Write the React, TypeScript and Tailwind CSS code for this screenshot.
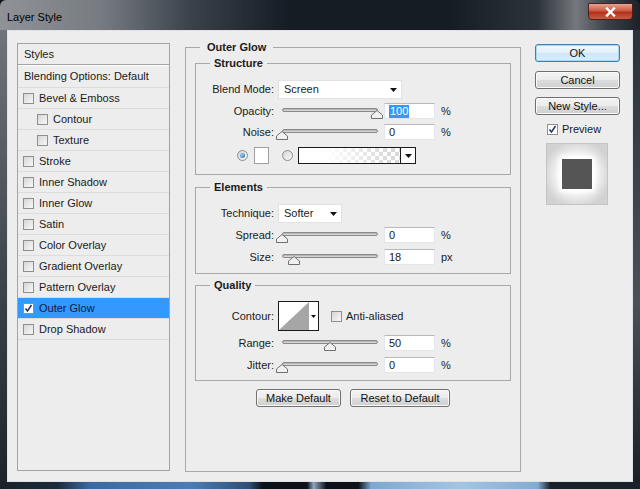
import React from "react";

type Row = { label: string; indent?: boolean; checked?: boolean; active?: boolean };

const styleRows: Row[] = [
  { label: "Bevel & Emboss" },
  { label: "Contour", indent: true },
  { label: "Texture", indent: true },
  { label: "Stroke" },
  { label: "Inner Shadow" },
  { label: "Inner Glow" },
  { label: "Satin" },
  { label: "Color Overlay" },
  { label: "Gradient Overlay" },
  { label: "Pattern Overlay" },
  { label: "Outer Glow", checked: true, active: true },
  { label: "Drop Shadow" },
];

function CheckBox({ checked = false }: { checked?: boolean }) {
  return (
    <span
      className={
        checked
          ? "w-[11px] h-[11px] shrink-0 border border-[#8f8f8f] bg-white flex items-center justify-center"
          : "w-[11px] h-[11px] shrink-0 border border-[#8f8f8f] bg-[linear-gradient(135deg,#d6d6d6,#f8f8f8)] flex items-center justify-center"
      }
    >
      {checked && (
        <svg width="9" height="9" viewBox="0 0 9 9">
          <path d="M1.5 4.5 L3.5 7 L7.5 1" fill="none" stroke="#23306b" strokeWidth="1.5" />
        </svg>
      )}
    </span>
  );
}

function Arrow() {
  return (
    <svg width="7" height="4" viewBox="0 0 7 4" className="shrink-0">
      <path d="M0 0 H7 L3.5 4 Z" fill="#111" />
    </svg>
  );
}

function Slider({ pos }: { pos: number }) {
  return (
    <div className="relative w-[104px] h-[16px] shrink-0">
      <div className="mx-[4px] mt-[5px] h-[4px] rounded-full border border-[#8a8a8a] bg-[linear-gradient(#a8a8a8,#e4e4e4)]" />
      <svg
        className="absolute top-[7px]"
        style={{ left: 4 + pos * 95 - 6 }}
        width="12"
        height="9"
        viewBox="0 0 12 9"
      >
        <path d="M6 0.5 L11.5 5 V8.5 H0.5 V5 Z" fill="#f1f1f1" stroke="#707070" />
      </svg>
    </div>
  );
}

function NumBox({ value, selected = false }: { value: string; selected?: boolean }) {
  return (
    <div className="w-[51px] h-[16px] ml-[2px] bg-white border border-[#e3e6ea] border-t-[#b5b8bd] flex items-center pl-[4px] leading-none">
      {selected ? <span className="bg-[#3399ff] text-white px-[1px] py-[1px]">{value}</span> : value}
    </div>
  );
}

function SliderRow({
  label,
  pos,
  value,
  unit,
  selected,
  className,
}: {
  label: string;
  pos: number;
  value: string;
  unit: string;
  selected?: boolean;
  className: string;
}) {
  return (
    <div className={className}>
      <span className="w-[78px] shrink-0 text-right">{label}</span>
      <span className="w-[4px] shrink-0" />
      <Slider pos={pos} />
      <NumBox value={value} selected={selected} />
      <span className="ml-[6px]">{unit}</span>
    </div>
  );
}

function Button({ children, primary = false, className = "" }: { children: React.ReactNode; primary?: boolean; className?: string }) {
  return (
    <div
      className={
        (primary
          ? "border-[#3c7fb1] bg-[linear-gradient(#f1f8fd,#e2f0fa_50%,#cfe6f7_50%,#dcedf9)] shadow-[inset_0_0_0_1px_#a6d6f4] "
          : "border-[#707070] bg-[linear-gradient(#f3f3f3,#ebebeb_50%,#dddddd_50%,#cfcfcf)] shadow-[inset_0_0_0_1px_#fbfbfb] ") +
        "h-[18px] border rounded-[3px] flex items-center justify-center text-[#111] " +
        className
      }
    >
      {children}
    </div>
  );
}

function Radio({ on = false }: { on?: boolean }) {
  return (
    <span className="w-[11px] h-[11px] shrink-0 rounded-full border border-[#8c8c8c] bg-[linear-gradient(135deg,#d4d4d4,#fafafa)] flex items-center justify-center">
      {on && <span className="w-[5px] h-[5px] rounded-full bg-[radial-gradient(circle_at_35%_35%,#9fd0f5,#1f5fa8)]" />}
    </span>
  );
}

export default function App() {
  return (
    <div className="w-[640px] h-[489px] flex flex-col bg-[#0f1318] font-['Liberation_Sans',Arial,sans-serif] text-[11px] text-[#1a1a1a] overflow-hidden">
      {/* title bar */}
      <div className="h-[30px] shrink-0 flex items-start justify-between rounded-t-[6px] bg-[linear-gradient(90deg,#8f9398_0%,#767b81_16%,#3a414a_30%,#161c24_45%,#161c24_70%,#2c333b_84%,#75797e_90%,#3a4048_95%,#1c2128_100%)]">
        <span className="mt-[9px] ml-[7px] text-[11px] text-black">Layer Style</span>
        <div className="mt-[3px] mr-[7px] w-[45px] h-[17px] rounded-b-[4px] border border-[#4d1f18] bg-[linear-gradient(#e3a493,#cd5a43_45%,#b3321d_55%,#c85b44)] flex items-center justify-center">
          <svg width="11" height="10" viewBox="0 0 11 10">
            <path d="M2 1.5 L9 8.5 M9 1.5 L2 8.5" stroke="#fff" strokeWidth="2.4" strokeLinecap="square" />
          </svg>
        </div>
      </div>

      <div className="flex-1 flex min-h-0">
        <div className="w-[7px] shrink-0 bg-[linear-gradient(#6f747a,#3a4047_60%,#1e242b)]" />

        {/* dialog body */}
        <div className="flex-1 bg-[#ededed] border border-[#dfe2e6] flex items-start pl-[9px] pt-[10px]">
          {/* styles list */}
          <div className="mt-[2px] w-[153px] h-[428px] shrink-0 border border-[#a3a3a3] flex flex-col">
            <div className="h-[20px] flex items-center pl-[6px]">Styles</div>
            <div className="h-[2px] border-t border-[#a3a3a3] border-b border-b-white" />
            <div className="h-[22px] flex items-center pl-[6px] border-b border-[#dcdcdc]">Blending Options: Default</div>
            {styleRows.map((r) => (
              <div
                key={r.label}
                className={
                  (r.active ? "bg-[#3399ff] text-[#0d1b3a] " : "") +
                  (r.indent ? "pl-[19px] " : "pl-[5px] ") +
                  "h-[21px] flex items-center gap-[5px] border-b border-[#dcdcdc]"
                }
              >
                <CheckBox checked={r.checked} />
                <span>{r.label}</span>
              </div>
            ))}
          </div>

          {/* main settings */}
          <fieldset className="ml-[15px] w-[336px] h-[431px] shrink-0 border border-[#a9a9a9] px-[9px]">
            <legend className="ml-[5px] px-[7px] font-bold leading-[13px]">Outer Glow</legend>

            <fieldset className="mt-[3px] border border-[#a9a9a9] pb-[10px]">
              <legend className="ml-[14px] px-[4px] font-bold leading-[13px]">Structure</legend>
              <div className="mt-[10px] h-[19px] flex items-center">
                <span className="w-[78px] shrink-0 text-right">Blend Mode:</span>
                <div className="ml-[4px] w-[124px] h-[19px] bg-white border border-[#e2e2e2] flex items-center justify-between pl-[5px] pr-[4px]">
                  <span>Screen</span>
                  <Arrow />
                </div>
              </div>
              <SliderRow className="mt-[4px] h-[16px] flex items-center" label="Opacity:" pos={1} value="100" unit="%" selected />
              <SliderRow className="mt-[5px] h-[16px] flex items-center" label="Noise:" pos={0} value="0" unit="%" />
              <div className="mt-[7px] h-[17px] flex items-center pl-[41px]">
                <Radio on />
                <span className="ml-[6px] w-[15px] h-[17px] bg-white border border-[#a0a0a0]" />
                <span className="ml-[13px]">
                  <Radio />
                </span>
                <div className="ml-[5px] w-[118px] h-[17px] border border-[#1a1a1a] flex">
                  <div className="flex-1 bg-[linear-gradient(90deg,#ffffff_25%,rgba(255,255,255,0)_90%),conic-gradient(#d9d9d9_25%,#ffffff_0_50%,#d9d9d9_0_75%,#ffffff_0)] bg-[length:100%_100%,8px_8px]" />
                  <div className="w-[15px] border-l border-[#1a1a1a] bg-white flex items-center justify-center">
                    <Arrow />
                  </div>
                </div>
              </div>
            </fieldset>

            <fieldset className="mt-[6px] border border-[#a9a9a9] pb-[8px]">
              <legend className="ml-[14px] px-[4px] font-bold leading-[13px]">Elements</legend>
              <div className="mt-[10px] h-[19px] flex items-center">
                <span className="w-[78px] shrink-0 text-right">Technique:</span>
                <div className="ml-[4px] w-[64px] h-[19px] bg-white border border-[#e2e2e2] flex items-center justify-between pl-[5px] pr-[4px]">
                  <span>Softer</span>
                  <Arrow />
                </div>
              </div>
              <SliderRow className="mt-[4px] h-[16px] flex items-center" label="Spread:" pos={0} value="0" unit="%" />
              <SliderRow className="mt-[6px] h-[16px] flex items-center" label="Size:" pos={0.13} value="18" unit="px" />
            </fieldset>

            <fieldset className="mt-[5px] border border-[#a9a9a9] pb-[7px]">
              <legend className="ml-[14px] px-[4px] font-bold leading-[13px]">Quality</legend>
              <div className="mt-[9px] h-[30px] flex items-center">
                <span className="w-[78px] shrink-0 text-right">Contour:</span>
                <div className="ml-[4px] w-[41px] h-[30px] border border-[#1a1a1a] bg-white flex">
                  <svg width="30" height="28" viewBox="0 0 30 28" className="shrink-0">
                    <path d="M0 28 L30 0 V28 Z" fill="#a6a6a6" />
                  </svg>
                  <div className="flex-1 flex items-center justify-center">
                    <svg width="5" height="3" viewBox="0 0 5 3">
                      <path d="M0 0 H5 L2.5 3 Z" fill="#111" />
                    </svg>
                  </div>
                </div>
                <span className="ml-[12px]">
                  <CheckBox />
                </span>
                <span className="ml-[4px]">Anti-aliased</span>
              </div>
              <SliderRow className="mt-[4px] h-[16px] flex items-center" label="Range:" pos={0.5} value="50" unit="%" />
              <SliderRow className="mt-[6px] h-[16px] flex items-center" label="Jitter:" pos={0} value="0" unit="%" />
            </fieldset>

            <div className="mt-[8px] flex justify-center gap-[9px]">
              <Button className="w-[85px]">Make Default</Button>
              <Button className="w-[100px]">Reset to Default</Button>
            </div>
          </fieldset>

          {/* buttons column */}
          <div className="ml-[14px] mt-[3px] w-[85px] shrink-0 flex flex-col">
            <Button primary>OK</Button>
            <Button className="mt-[9px]">Cancel</Button>
            <Button className="mt-[8px]">New Style...</Button>
            <div className="mt-[9px] h-[11px] flex items-center pl-[12px] gap-[4px]">
              <CheckBox checked />
              <span>Preview</span>
            </div>
            <div className="mt-[8px] ml-[11px] w-[62px] h-[62px] border border-[#c4c4c4] bg-[radial-gradient(circle,#ffffff_35%,#d2d2d2_80%)] flex items-center justify-center">
              <div className="w-[30px] h-[30px] bg-[#555555] shadow-[0_0_5px_3px_#ffffff]" />
            </div>
          </div>
        </div>

        <div className="w-[7px] shrink-0 bg-[linear-gradient(#2c323a,#4b5057_60%,#1a1f25)]" />
      </div>

      <div className="h-[7px] shrink-0 bg-[linear-gradient(90deg,#1b2128_0%,#1d2a3a_9%,#3a6aa2_14%,#4a7db5_30%,#2e4e75_39%,#0e1218_41%,#0e1218_48%,#8fa6bd_49%,#0e1218_51%,#0e1218_56%,#7ea8d0_58%,#a3c5e3_72%,#83abd2_84%,#1b2128_86%,#1b2128_100%)]" />
    </div>
  );
}
